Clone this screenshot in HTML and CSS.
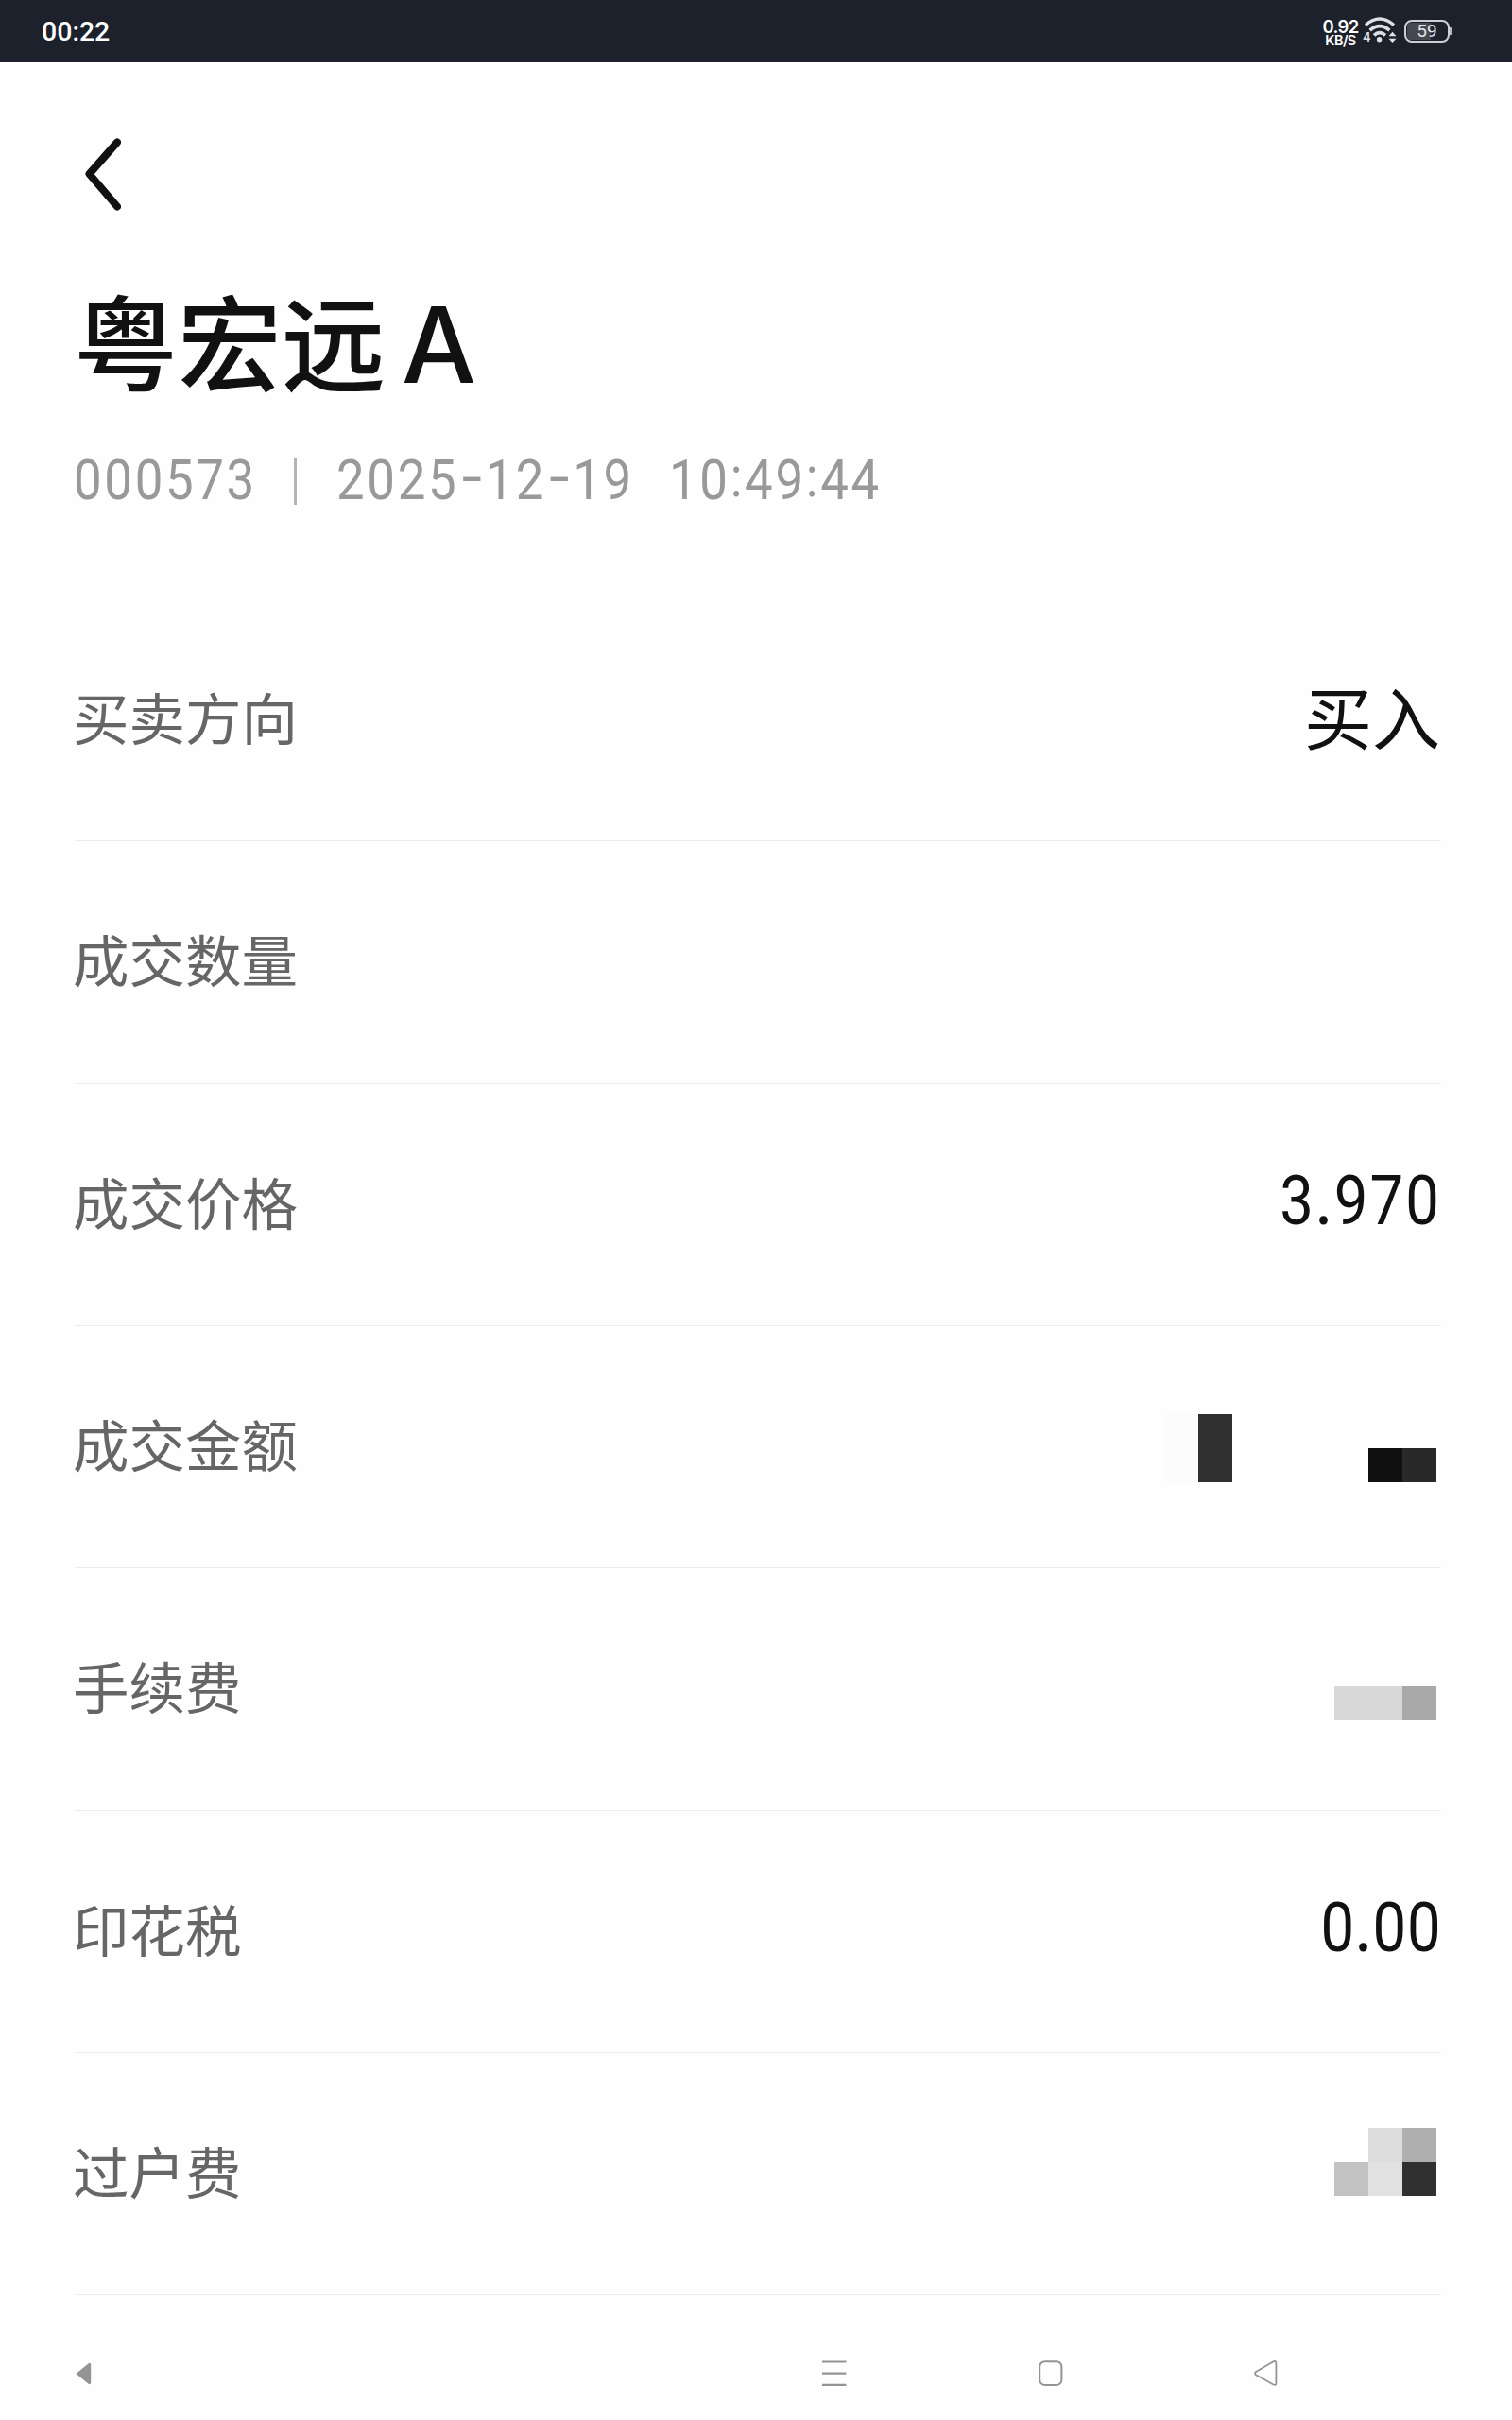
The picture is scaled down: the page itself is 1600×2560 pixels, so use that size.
FILE: index.html
```html
<!DOCTYPE html>
<html lang="zh-CN">
<head>
<meta charset="utf-8">
<title>成交详情</title>
<link rel="stylesheet" href="styles.css">
</head>
<body>
<header class="status">
  <span class="clock">00:22</span>
  <div class="indicators">
    <div class="speed"><span class="rate">0.92</span><span class="unit">KB/S</span></div>
    <svg class="wifi" width="36" height="28" viewBox="0 0 36 28">
      <g fill="none" stroke="#dfe0e4" stroke-width="3.6">
        <path d="M3 8.5Q18 -4.5 33 8.5"/><path d="M7.6 14.2Q18 5.2 28.4 14.2"/><path d="M12 19.4Q18 14 24 19.4"/>
      </g>
      <circle cx="17.6" cy="23.8" r="2.7" fill="#dfe0e4"/>
      <path d="M27.5 20.3L31.5 15.7L35.5 20.3ZM27.5 22.7L31.5 27L35.5 22.7Z" fill="#dfe0e4"/>
      <text class="generation" x="0" y="26">4</text>
    </svg>
    <div class="battery"><span class="level">59</span></div>
    <span class="battery-tip"></span>
  </div>
</header>
<main class="page">
  <svg class="back" width="38" height="77" viewBox="0 0 38 77"><path d="M34 4.5L4.5 38L34 72.5" fill="none" stroke="#111" stroke-width="8" stroke-linecap="round" stroke-linejoin="round"/></svg>
  <h1 class="title"><span>粤宏远</span><span class="share">A</span></h1>
  <div class="meta">
    <span class="num code">000573</span><span class="bar"></span><span class="num date">2025<span class="dash">-</span>12<span class="dash">-</span>19</span><span class="num time">10<span class="colon">:</span>49<span class="colon">:</span>44</span>
  </div>
  <section class="details">
    <div class="row"><span class="label">买卖方向</span><span class="value side">买入</span></div>
    <div class="row"><span class="label">成交数量</span></div>
    <div class="row"><span class="label">成交价格</span><span class="value num price">3<span class="point">.</span>970</span></div>
    <div class="row"><span class="label">成交金额</span>
      <div class="mosaic amount"><i class="m1"></i><i class="m2"></i><i class="m3"></i><i class="m4"></i></div></div>
    <div class="row"><span class="label">手续费</span>
      <div class="mosaic fee"><i class="f1"></i><i class="f2"></i></div></div>
    <div class="row"><span class="label">印花税</span><span class="value num tax">0<span class="point">.</span>00</span></div>
    <div class="row"><span class="label">过户费</span>
      <div class="mosaic transfer"><i class="t0"></i><i class="t1"></i><i class="t2"></i><i class="t3"></i><i class="t4"></i><i class="t5"></i></div></div>
  </section>
</main>
<footer class="nav">
  <svg width="17" height="24" viewBox="0 0 17 24"><path d="M1.6 12L14.5 1.5Q15.4 1.5 15.4 2.4V21.6Q15.4 22.5 14.5 22.5Z" fill="#949494" stroke="#949494" stroke-width="1.6" stroke-linejoin="round"/></svg>
  <div class="keys">
    <svg width="26" height="28" viewBox="0 0 26 28"><path d="M0 1.5H25.4M0 13.7H25.4M0 25.9H25.4" stroke="#949494" stroke-width="2.2"/></svg>
    <svg width="26" height="28" viewBox="0 0 26 28"><rect x="1.2" y="1.2" width="23.2" height="24.8" rx="5.5" fill="none" stroke="#949494" stroke-width="2"/></svg>
    <svg width="26" height="28" viewBox="0 0 26 28"><path d="M2.1 12L20 1.5Q23.4 0 23.4 3V24Q23.4 27 20 25.2L2.1 15.3Q0 13.6 2.1 12Z" fill="none" stroke="#949494" stroke-width="1.8"/></svg>
  </div>
</footer>
</body>
</html>
```
FILE: styles.css
```css
* { box-sizing: border-box; }
body {
  margin: 0;
  width: 1600px;
  height: 2560px;
  overflow: hidden;
  display: flex;
  flex-direction: column;
  background: #fefefe;
  color: #111;
  font-family: "Noto Sans CJK SC", sans-serif;
}
svg { display: block; flex: none; }

.status {
  flex: none;
  height: 66px;
  padding: 0 63px 0 44px;
  display: flex;
  align-items: center;
  justify-content: space-between;
  background: #1d212b;
  color: #fff;
}
.clock { padding-top: 2px; font: 500 28.5px/66px Roboto, sans-serif; }
.indicators { display: flex; align-items: center; }
.speed {
  width: 37px;
  margin: 2px 5px 0 0;
  display: flex;
  flex-direction: column;
  align-items: center;
  font-family: Inter, sans-serif;
  font-weight: 600;
  white-space: nowrap;
}
.rate { font-size: 18.5px; line-height: 16px; letter-spacing: -.7px; }
.unit { font-size: 14.5px; line-height: 13px; letter-spacing: -.6px; }
.generation { font: 600 13px Inter, sans-serif; fill: #dfe0e4; }
.wifi { margin: -2px 8px 0 0; }
.battery {
  width: 48px;
  height: 24px;
  border: 2px solid #cfd0d5;
  border-radius: 8px;
  padding: 1px;
}
.level {
  display: block;
  height: 18px;
  border-radius: 4px;
  background: linear-gradient(90deg, #454851 59%, transparent 59%);
  color: #e4e5e9;
  font: 400 19px/18px Roboto, sans-serif;
  text-align: center;
}
.battery-tip { width: 3px; height: 8px; background: #b9bbc1; border-radius: 0 2px 2px 0; }

.page { flex: none; height: 2362px; padding: 80px 75px 0 79px; }
.back { margin-left: 11px; }
.title {
  margin: 55px 0 0 -1px;
  height: 160px;
  display: flex;
  gap: 17px;
  font-size: 110px;
  line-height: 160px;
  font-weight: 500;
}
.share { font-family: Inter, sans-serif; font-size: 111px; line-height: 174px; }
.num { font-family: Roboto, sans-serif; font-weight: 400; white-space: nowrap; }
.meta {
  height: 80px;
  margin-top: 30px;
  display: flex;
  align-items: center;
  color: #999;
  font-size: 60px;
  line-height: 80px;
}
.meta .num { flex: none; transform: scaleX(.88); transform-origin: left; letter-spacing: 3px; }
.code { width: 232px; margin-left: -1px; }
.bar { width: 3px; height: 50px; margin: 2px 42px 0 1px; background: #b4b4b4; }
.date { width: 352px; }
.dash { display: inline-block; width: 32px; line-height: 60px; text-align: center; transform: translateY(-3px) scaleX(1.45); letter-spacing: 0; }
.colon { display: inline-block; line-height: 60px; transform: translateY(-3px); }

.details { margin-top: 86px; }
.row {
  height: 256.34px;
  display: flex;
  align-items: center;
  justify-content: space-between;
  border-bottom: 1px solid #ebebeb;
}
.label { margin: -9px 0 0 -2px; color: #666; font-size: 59.5px; line-height: 80px; }
.value { font-size: 72px; line-height: 100px; }
.side { margin: -11px 1px 0 0; }
.price, .tax { margin-top: -6px; transform: scaleX(.88); transform-origin: right; letter-spacing: 1px; }
.price { letter-spacing: 2.4px; }
.point { font-weight: 500; }

.mosaic { display: grid; grid-auto-rows: 36px; margin-right: 5px; }
.amount { grid-template-columns: 36px 36px 144px 36px 36px; margin-top: 2px; }
.m1 { grid-area: 1 / 1 / 3 / 2; background: #fcfcfc; }
.m2 { grid-area: 1 / 2 / 3 / 3; background: #303030; }
.m3 { grid-area: 2 / 4; background: #101010; }
.m4 { grid-area: 2 / 5; background: #292929; }
.fee { grid-template-columns: 72px 36px; margin-top: 30px; }
.f1 { background: #d8d8d8; }
.f2 { background: #a9a9a9; }
.transfer { grid-template-columns: repeat(3, 36px); margin-bottom: 26px; }
.t1 { background: #dcdcdc; }
.t2 { background: #afafaf; }
.t3 { background: #c2c2c2; }
.t4 { background: #e1e1e1; }
.t5 { background: #303030; }

.nav {
  flex: 1;
  display: flex;
  align-items: center;
  padding: 33px 247px 0 80px;
  justify-content: space-between;
}
.keys { display: flex; gap: 202.5px; }
```
